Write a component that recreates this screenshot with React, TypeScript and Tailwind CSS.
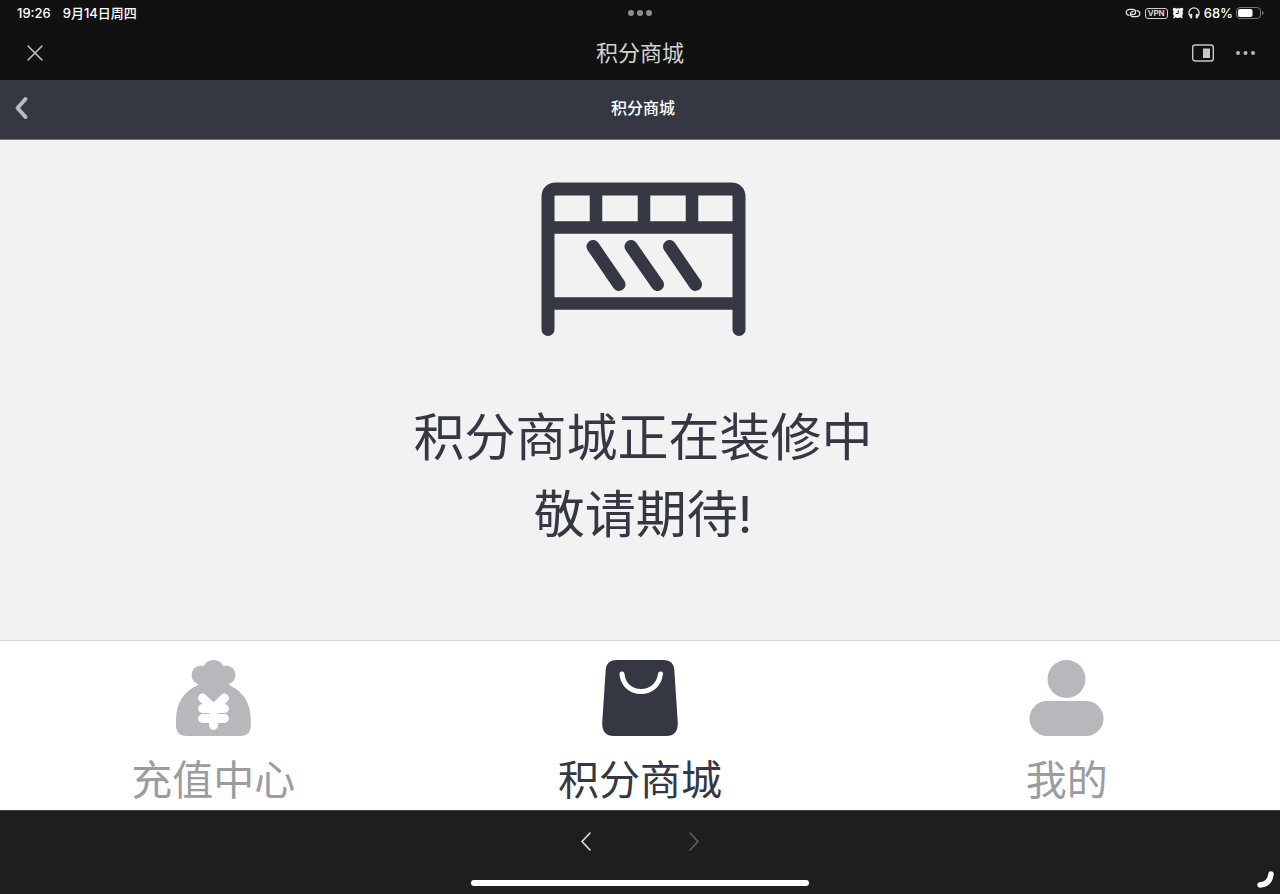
import { useState } from "react";

type TabKey = "recharge" | "mall" | "mine";

function LinkIcon() {
  return (
    <svg className="w-4 h-3" viewBox="0 0 16 12" fill="none" stroke="#e6e6e6" strokeWidth="1.2" strokeLinecap="round">
      <path d="M4 8.300C2.300 8 1.200 6.900 1.200 5.400 1.200 3.500 2.700 2.300 4.800 2.300H7.500C9.400 2.300 10.600 3.400 10.600 5S9.400 7.600 7.800 7.600C6.800 7.600 6.100 7.200 5.700 6.500" />
      <path d="M12 3.700C13.700 4 14.800 5.100 14.800 6.600 14.800 8.500 13.300 9.700 11.200 9.700H8.500C6.600 9.700 5.400 8.600 5.400 7S6.600 4.400 8.200 4.400" />
    </svg>
  );
}

function AlarmIcon() {
  return (
    <svg className="w-3 h-3" viewBox="0 0 12 12" fill="#f2f2f2">
      <circle cx="6" cy="6.200" r="4.900" />
      <circle cx="2.500" cy="2.500" r="1.800" />
      <circle cx="9.500" cy="2.500" r="1.800" />
      <path d="M2.800 9.500 2 10.700M9.200 9.500l.8 1.200" stroke="#f2f2f2" strokeWidth="1.500" strokeLinecap="round" />
      <path d="M6.300 3.600v2.900H4.300" stroke="#111" strokeWidth="0.900" fill="none" strokeLinecap="round" />
    </svg>
  );
}

function HeadphonesIcon() {
  return (
    <svg className="w-3 h-3" viewBox="0 0 12 12" fill="none" stroke="#e6e6e6" strokeLinecap="round">
      <path d="M2.200 9.300C1.200 8.200.9 7.200.9 6a5.100 5.100 0 0 1 10.200 0c0 1.200-.3 2.200-1.300 3.300" strokeWidth="1.300" />
      <path d="M3.200 7.800v2.600M8.800 7.800v2.600" strokeWidth="2.100" />
    </svg>
  );
}

function BatteryIcon() {
  return (
    <svg className="w-7 h-3" viewBox="0 0 28 12">
      <rect x="0.500" y="0.500" width="24" height="11" rx="3.500" fill="none" stroke="#777" />
      <rect x="2" y="2" width="14.500" height="8" rx="2" fill="#fff" />
      <path d="M26 4v4c1-.3 1.600-1.100 1.600-2S27 4.300 26 4z" fill="#777" />
    </svg>
  );
}

function BarrierIcon() {
  return (
    <svg className="w-52 h-40" viewBox="0 0 208 160" fill="none" stroke="#353843">
      <path d="M9 149.500V17Q9 9 17 9H192Q200 9 200 17V149.500" strokeWidth="13" strokeLinecap="round" />
      <path d="M9 47.500H200M9 123.500H200" strokeWidth="12.500" />
      <path d="M57 9V47M105 9V47M153 9V47" strokeWidth="12.500" />
      <path d="M54 66.500 80 104.500M92 66.500 118.500 104.500M130.500 66.500 156.500 104.500" strokeWidth="13" strokeLinecap="round" />
    </svg>
  );
}

function MoneyBagIcon() {
  return (
    <svg className="w-19 h-19" viewBox="0 0 76 76" fill="#b7b8bc">
      <circle cx="26" cy="15" r="9.500" />
      <circle cx="38.500" cy="11" r="11" />
      <circle cx="51" cy="15" r="9.500" />
      <path d="M23 15H54V25Q75.800 35 75.800 60V65Q75.800 76 65 76H12Q1 76 1 65V60Q1 35 23 25z" />
      <path
        d="M27.500 38 38.500 48.500 49.500 38M27.500 48.500H49.500M27.500 58.500H49.500M38.500 48V65.500"
        fill="none"
        stroke="#fff"
        strokeWidth="8.800"
        strokeLinecap="round"
      />
    </svg>
  );
}

function BagIcon() {
  return (
    <svg className="w-19 h-19" viewBox="0 0 76 76">
      <path d="M14 0H62Q71.500 0 72.300 10L75.800 63Q76 76 64 76H12Q0 76 .2 63L3.700 10Q4.500 0 14 0z" fill="#353843" />
      <path d="M20 14C21 25 29 31.500 39 31.500S57 25 58.500 14" fill="none" stroke="#fff" strokeWidth="5" strokeLinecap="round" />
    </svg>
  );
}

function PersonIcon() {
  return (
    <svg className="w-19 h-19" viewBox="0 0 76 76" fill="#b7b8bc">
      <circle cx="37.500" cy="19" r="19" />
      <rect x="0.500" y="41" width="74" height="35" rx="17.500" />
    </svg>
  );
}

const tabs = [
  { key: "recharge" as TabKey, label: "充值中心", icon: <MoneyBagIcon /> },
  { key: "mall" as TabKey, label: "积分商城", icon: <BagIcon /> },
  { key: "mine" as TabKey, label: "我的", icon: <PersonIcon /> },
];

export default function App() {
  const [active, setActive] = useState<TabKey>("mall");

  return (
    <div className="relative min-h-screen flex flex-col bg-[#f2f2f2] font-['Inter','Noto_Sans_CJK_SC',sans-serif]">
      {/* System status bar */}
      <div className="grid grid-cols-3 items-center h-[26px] pl-[17px] pr-4 bg-[#111111] text-white text-[13px] leading-5 font-medium">
        <div className="flex gap-3">
          <span>19:26</span>
          <span>9月14日周四</span>
        </div>
        <div className="flex justify-center gap-[3px]">
          {[0, 1, 2].map((i) => (
            <span key={i} className="w-1.5 h-1.5 rounded-full bg-[#8e8e8e]" />
          ))}
        </div>
        <div className="flex items-center justify-end gap-1">
          <LinkIcon />
          <span className="px-[2px] rounded-[3px] border border-[#d0d0d0] text-[8px] leading-[9px] font-semibold text-[#e6e6e6]">
            VPN
          </span>
          <AlarmIcon />
          <HeadphonesIcon />
          <div className="flex items-center gap-[3px]">
            <span>68%</span>
            <BatteryIcon />
          </div>
        </div>
      </div>

      {/* Window title */}
      <header className="grid grid-cols-3 items-center h-[54px] px-6 bg-[#111111]">
        <button aria-label="关闭" className="justify-self-start w-6 h-6">
          <svg viewBox="0 0 24 24" fill="none" stroke="#c4c4c4" strokeWidth="1.500" strokeLinecap="round">
            <path d="M4 5 18 19M18 5 4 19" />
          </svg>
        </button>
        <h1 className="text-center text-[22px] leading-8 text-[#d2d2d2]">积分商城</h1>
        <div className="flex justify-end items-center gap-5">
          <button aria-label="分屏">
            <svg className="w-6 h-5" viewBox="0 0 24 20">
              <rect x="0.700" y="2" width="20.600" height="16" rx="2.500" fill="none" stroke="#c8c8c8" strokeWidth="1.400" />
              <rect x="11" y="5.500" width="7" height="9.500" fill="#c8c8c8" />
            </svg>
          </button>
          <button aria-label="更多">
            <svg className="w-5 h-5" viewBox="0 0 20 20" fill="#b8b8b8">
              <circle cx="2" cy="10" r="2" />
              <circle cx="9.500" cy="10" r="2" />
              <circle cx="17" cy="10" r="2" />
            </svg>
          </button>
        </div>
      </header>

      {/* Page nav */}
      <nav className="grid grid-cols-3 items-center h-[60px] pl-3 pr-1.5 pb-1 bg-[#353843] border-b border-[#74767e]">
        <button aria-label="返回" className="justify-self-start w-5 h-6">
          <svg viewBox="0 0 20 24" fill="none" stroke="#b9babe" strokeWidth="4" strokeLinecap="round" strokeLinejoin="round">
            <path d="M13.500 3 5.500 12 13.500 21" />
          </svg>
        </button>
        <h2 className="text-center text-base leading-6 font-medium text-white">积分商城</h2>
      </nav>

      <main className="flex-1 flex flex-col items-center pt-10 pl-1.5">
        <BarrierIcon />
        <p className="mt-[59px] text-center text-[51px] leading-[77px] text-[#353843]">
          积分商城正在装修中
          <br />
          敬请期待!
        </p>
      </main>

      {/* Tab bar */}
      <div className="grid grid-cols-3 h-[170px] pt-[19px] bg-white border-t border-[#d3d3dd]">
        {tabs.map((tab) => (
          <button
            key={tab.key}
            onClick={() => setActive(tab.key)}
            className={`flex flex-col items-center gap-3.5 text-[41px] leading-[60px] ${
              active === tab.key ? "text-[#353843]" : "text-[#9b9ca2]"
            }`}
          >
            {tab.icon}
            {tab.label}
          </button>
        ))}
      </div>

      {/* Browser toolbar */}
      <footer className="flex flex-col items-center justify-between h-[84px] pt-5 pb-2 bg-[#1e1e1e] border-t border-[#444]">
        <div className="flex gap-[84px]">
          <button aria-label="后退" className="w-6 h-6">
            <svg viewBox="0 0 24 24" fill="none" stroke="#e0e0e0" strokeWidth="1.600" strokeLinecap="round">
              <path d="M16 2 8 10.500 16 19" />
            </svg>
          </button>
          <button aria-label="前进" className="w-6 h-6" disabled>
            <svg viewBox="0 0 24 24" fill="none" stroke="#606060" strokeWidth="1.600" strokeLinecap="round">
              <path d="M8 2 16 10.500 8 19" />
            </svg>
          </button>
        </div>
        <div className="w-[338px] h-1.5 rounded-full bg-white" />
      </footer>
      <svg className="absolute right-0 bottom-0 w-7 h-7" viewBox="0 0 28 28" fill="none">
        <path d="M8 19Q18 18 19 8" stroke="#fff" strokeWidth="5.500" strokeLinecap="round" />
      </svg>
    </div>
  );
}
